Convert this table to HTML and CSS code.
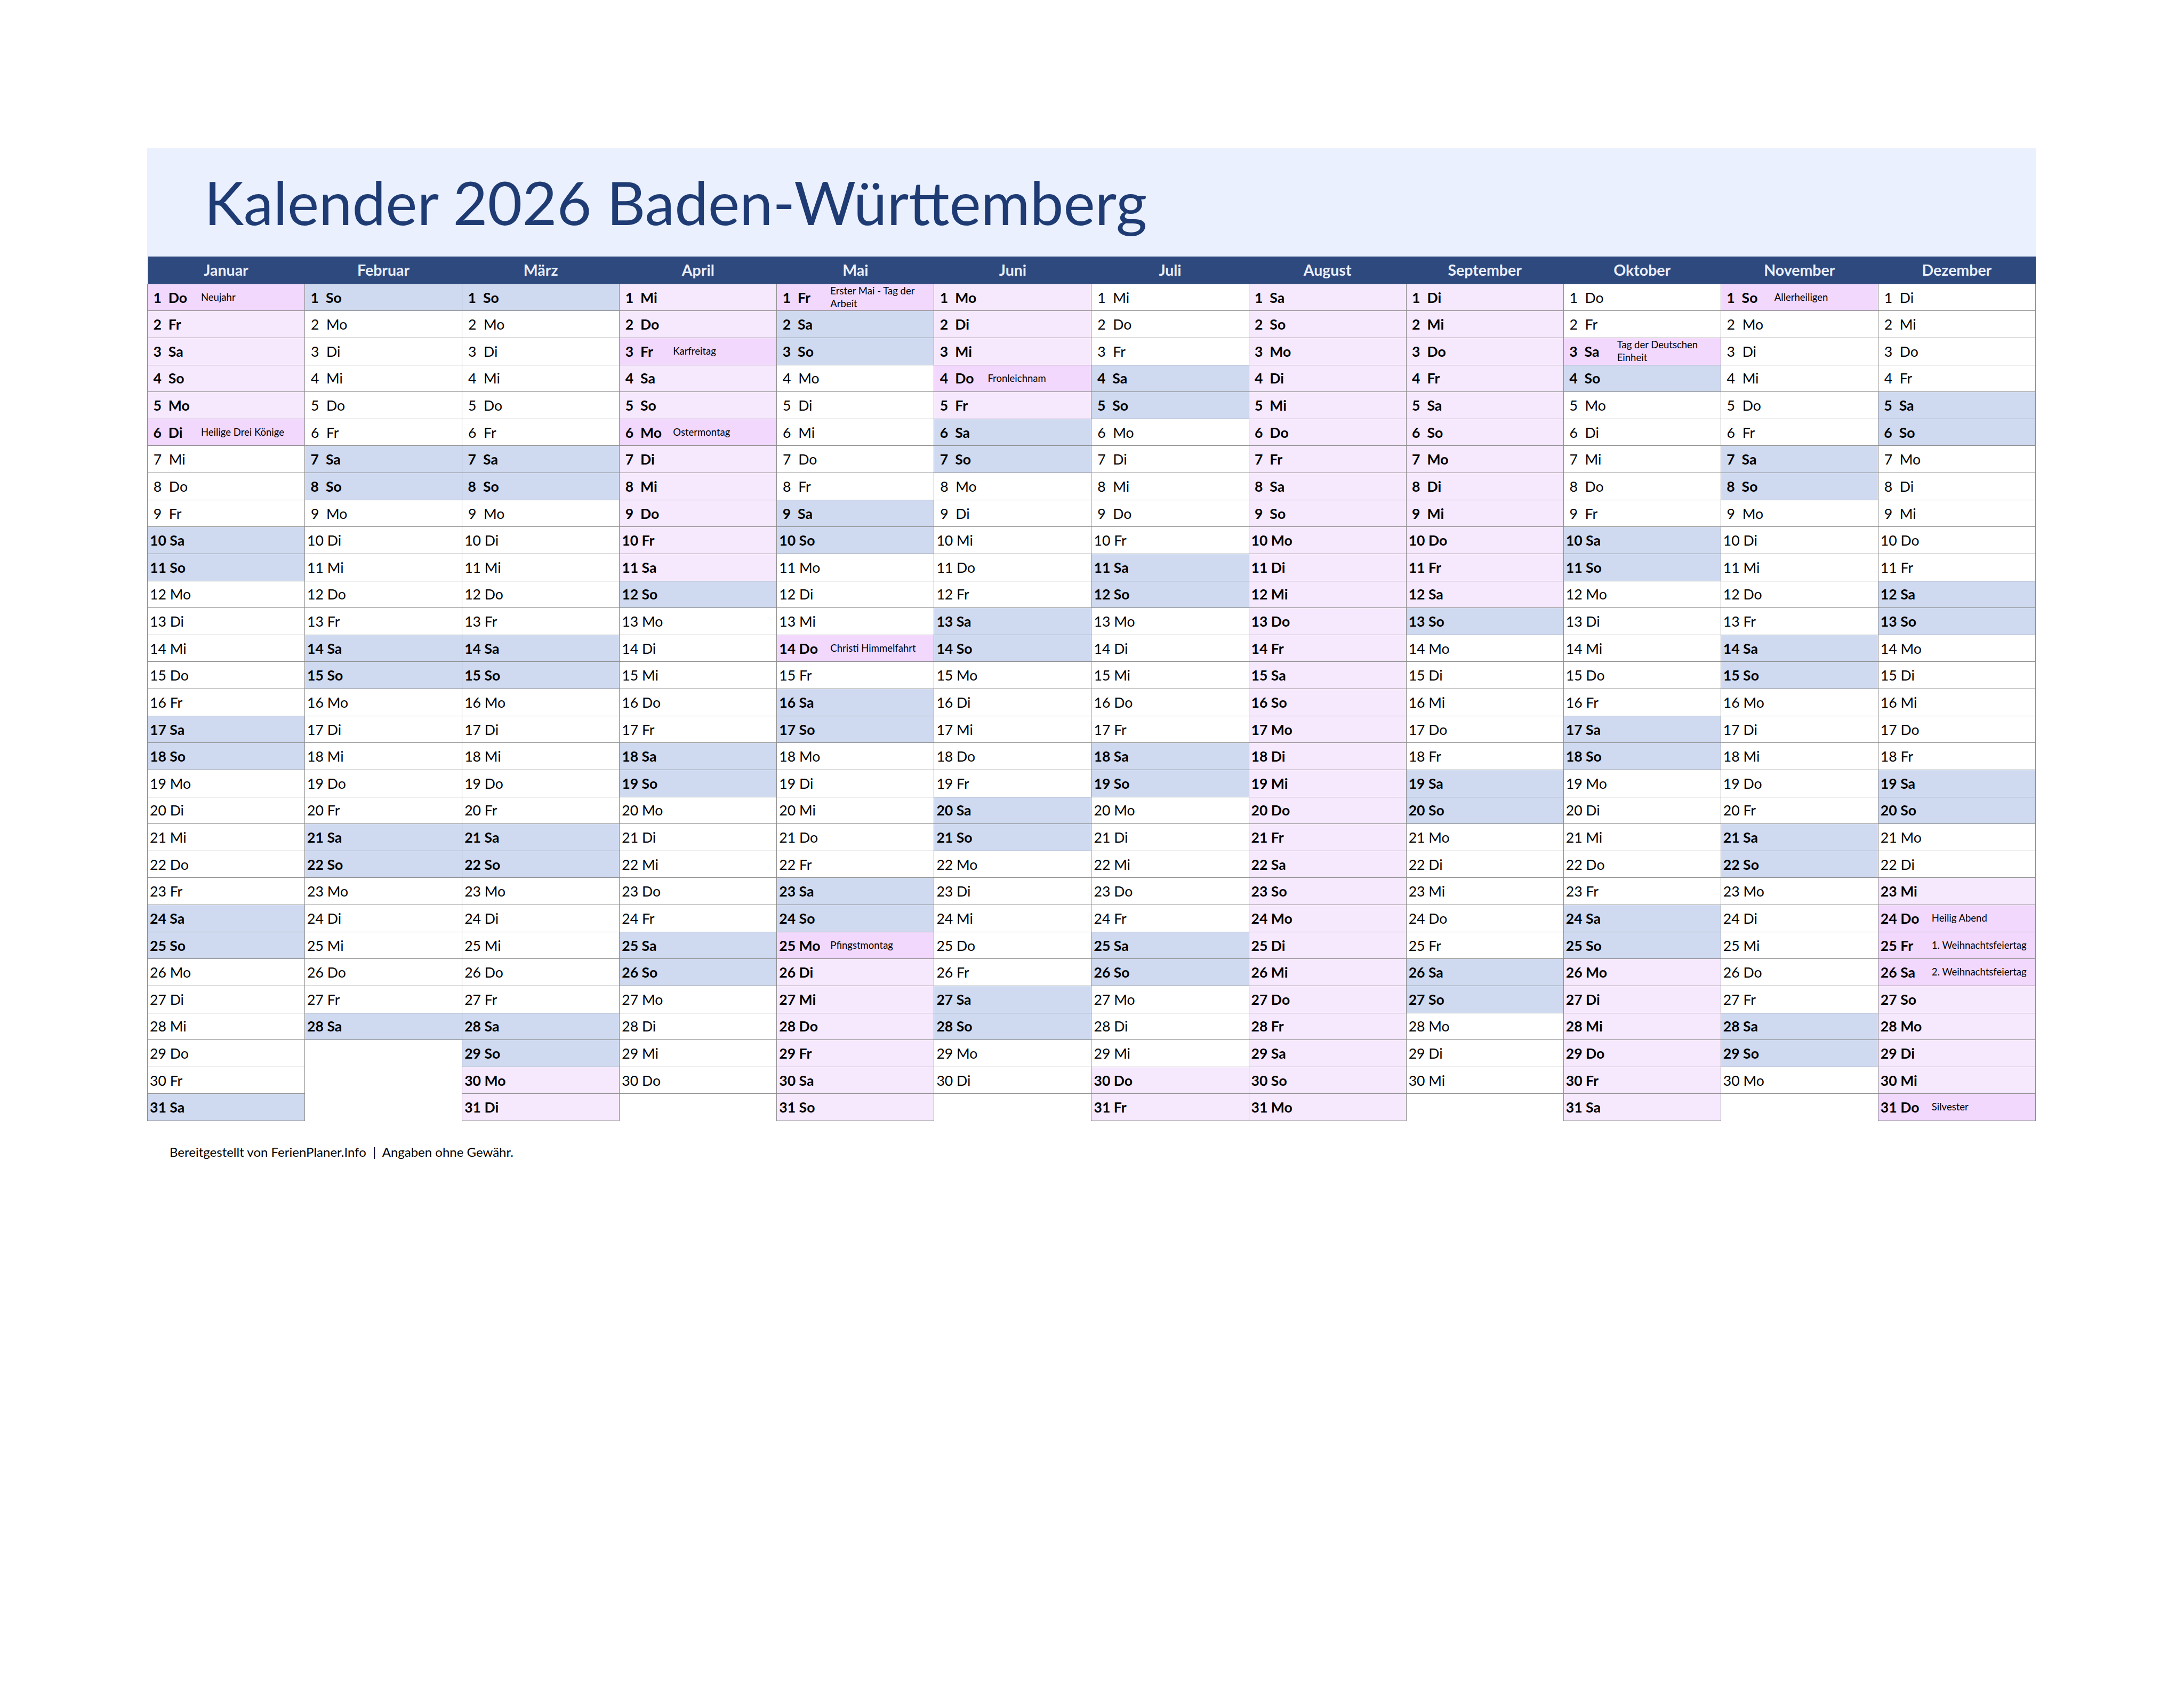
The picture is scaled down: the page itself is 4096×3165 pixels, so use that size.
FILE: index.html
```html
<!DOCTYPE html>
<html lang="de">
<head>
<meta charset="utf-8">
<title>Kalender 2026 Baden-Württemberg</title>
<link rel="stylesheet" href="styles.css">
</head>
<body>
<div class="page">
<div class="banner"><h1 class="title">Kalender 2026 Baden-Württemberg</h1></div>
<table class="cal">
<thead>
<tr><th>Januar</th><th>Februar</th><th>März</th><th>April</th><th>Mai</th><th>Juni</th><th>Juli</th><th>August</th><th>September</th><th>Oktober</th><th>November</th><th>Dezember</th></tr>
</thead>
<tbody>
<tr><td class="ho"><div class="c"><span class="d"> 1  Do</span><span class="n">Neujahr</span></div></td><td class="we"> 1  So</td><td class="we"> 1  So</td><td class="fe"> 1  Mi</td><td class="ho"><div class="c"><span class="d"> 1  Fr</span><span class="n">Erster Mai - Tag der<br>Arbeit</span></div></td><td class="fe"> 1  Mo</td><td> 1  Mi</td><td class="fe"> 1  Sa</td><td class="fe"> 1  Di</td><td> 1  Do</td><td class="ho"><div class="c"><span class="d"> 1  So</span><span class="n">Allerheiligen</span></div></td><td> 1  Di</td></tr>
<tr><td class="fe"> 2  Fr</td><td> 2  Mo</td><td> 2  Mo</td><td class="fe"> 2  Do</td><td class="we"> 2  Sa</td><td class="fe"> 2  Di</td><td> 2  Do</td><td class="fe"> 2  So</td><td class="fe"> 2  Mi</td><td> 2  Fr</td><td> 2  Mo</td><td> 2  Mi</td></tr>
<tr><td class="fe"> 3  Sa</td><td> 3  Di</td><td> 3  Di</td><td class="ho"><div class="c"><span class="d"> 3  Fr</span><span class="n">Karfreitag</span></div></td><td class="we"> 3  So</td><td class="fe"> 3  Mi</td><td> 3  Fr</td><td class="fe"> 3  Mo</td><td class="fe"> 3  Do</td><td class="ho"><div class="c"><span class="d"> 3  Sa</span><span class="n">Tag der Deutschen<br>Einheit</span></div></td><td> 3  Di</td><td> 3  Do</td></tr>
<tr><td class="fe"> 4  So</td><td> 4  Mi</td><td> 4  Mi</td><td class="fe"> 4  Sa</td><td> 4  Mo</td><td class="ho"><div class="c"><span class="d"> 4  Do</span><span class="n">Fronleichnam</span></div></td><td class="we"> 4  Sa</td><td class="fe"> 4  Di</td><td class="fe"> 4  Fr</td><td class="we"> 4  So</td><td> 4  Mi</td><td> 4  Fr</td></tr>
<tr><td class="fe"> 5  Mo</td><td> 5  Do</td><td> 5  Do</td><td class="fe"> 5  So</td><td> 5  Di</td><td class="fe"> 5  Fr</td><td class="we"> 5  So</td><td class="fe"> 5  Mi</td><td class="fe"> 5  Sa</td><td> 5  Mo</td><td> 5  Do</td><td class="we"> 5  Sa</td></tr>
<tr><td class="ho"><div class="c"><span class="d"> 6  Di</span><span class="n">Heilige Drei Könige</span></div></td><td> 6  Fr</td><td> 6  Fr</td><td class="ho"><div class="c"><span class="d"> 6  Mo</span><span class="n">Ostermontag</span></div></td><td> 6  Mi</td><td class="we"> 6  Sa</td><td> 6  Mo</td><td class="fe"> 6  Do</td><td class="fe"> 6  So</td><td> 6  Di</td><td> 6  Fr</td><td class="we"> 6  So</td></tr>
<tr><td> 7  Mi</td><td class="we"> 7  Sa</td><td class="we"> 7  Sa</td><td class="fe"> 7  Di</td><td> 7  Do</td><td class="we"> 7  So</td><td> 7  Di</td><td class="fe"> 7  Fr</td><td class="fe"> 7  Mo</td><td> 7  Mi</td><td class="we"> 7  Sa</td><td> 7  Mo</td></tr>
<tr><td> 8  Do</td><td class="we"> 8  So</td><td class="we"> 8  So</td><td class="fe"> 8  Mi</td><td> 8  Fr</td><td> 8  Mo</td><td> 8  Mi</td><td class="fe"> 8  Sa</td><td class="fe"> 8  Di</td><td> 8  Do</td><td class="we"> 8  So</td><td> 8  Di</td></tr>
<tr><td> 9  Fr</td><td> 9  Mo</td><td> 9  Mo</td><td class="fe"> 9  Do</td><td class="we"> 9  Sa</td><td> 9  Di</td><td> 9  Do</td><td class="fe"> 9  So</td><td class="fe"> 9  Mi</td><td> 9  Fr</td><td> 9  Mo</td><td> 9  Mi</td></tr>
<tr><td class="we">10 Sa</td><td>10 Di</td><td>10 Di</td><td class="fe">10 Fr</td><td class="we">10 So</td><td>10 Mi</td><td>10 Fr</td><td class="fe">10 Mo</td><td class="fe">10 Do</td><td class="we">10 Sa</td><td>10 Di</td><td>10 Do</td></tr>
<tr><td class="we">11 So</td><td>11 Mi</td><td>11 Mi</td><td class="fe">11 Sa</td><td>11 Mo</td><td>11 Do</td><td class="we">11 Sa</td><td class="fe">11 Di</td><td class="fe">11 Fr</td><td class="we">11 So</td><td>11 Mi</td><td>11 Fr</td></tr>
<tr><td>12 Mo</td><td>12 Do</td><td>12 Do</td><td class="we">12 So</td><td>12 Di</td><td>12 Fr</td><td class="we">12 So</td><td class="fe">12 Mi</td><td class="fe">12 Sa</td><td>12 Mo</td><td>12 Do</td><td class="we">12 Sa</td></tr>
<tr><td>13 Di</td><td>13 Fr</td><td>13 Fr</td><td>13 Mo</td><td>13 Mi</td><td class="we">13 Sa</td><td>13 Mo</td><td class="fe">13 Do</td><td class="we">13 So</td><td>13 Di</td><td>13 Fr</td><td class="we">13 So</td></tr>
<tr><td>14 Mi</td><td class="we">14 Sa</td><td class="we">14 Sa</td><td>14 Di</td><td class="ho"><div class="c"><span class="d">14 Do</span><span class="n">Christi Himmelfahrt</span></div></td><td class="we">14 So</td><td>14 Di</td><td class="fe">14 Fr</td><td>14 Mo</td><td>14 Mi</td><td class="we">14 Sa</td><td>14 Mo</td></tr>
<tr><td>15 Do</td><td class="we">15 So</td><td class="we">15 So</td><td>15 Mi</td><td>15 Fr</td><td>15 Mo</td><td>15 Mi</td><td class="fe">15 Sa</td><td>15 Di</td><td>15 Do</td><td class="we">15 So</td><td>15 Di</td></tr>
<tr><td>16 Fr</td><td>16 Mo</td><td>16 Mo</td><td>16 Do</td><td class="we">16 Sa</td><td>16 Di</td><td>16 Do</td><td class="fe">16 So</td><td>16 Mi</td><td>16 Fr</td><td>16 Mo</td><td>16 Mi</td></tr>
<tr><td class="we">17 Sa</td><td>17 Di</td><td>17 Di</td><td>17 Fr</td><td class="we">17 So</td><td>17 Mi</td><td>17 Fr</td><td class="fe">17 Mo</td><td>17 Do</td><td class="we">17 Sa</td><td>17 Di</td><td>17 Do</td></tr>
<tr><td class="we">18 So</td><td>18 Mi</td><td>18 Mi</td><td class="we">18 Sa</td><td>18 Mo</td><td>18 Do</td><td class="we">18 Sa</td><td class="fe">18 Di</td><td>18 Fr</td><td class="we">18 So</td><td>18 Mi</td><td>18 Fr</td></tr>
<tr><td>19 Mo</td><td>19 Do</td><td>19 Do</td><td class="we">19 So</td><td>19 Di</td><td>19 Fr</td><td class="we">19 So</td><td class="fe">19 Mi</td><td class="we">19 Sa</td><td>19 Mo</td><td>19 Do</td><td class="we">19 Sa</td></tr>
<tr><td>20 Di</td><td>20 Fr</td><td>20 Fr</td><td>20 Mo</td><td>20 Mi</td><td class="we">20 Sa</td><td>20 Mo</td><td class="fe">20 Do</td><td class="we">20 So</td><td>20 Di</td><td>20 Fr</td><td class="we">20 So</td></tr>
<tr><td>21 Mi</td><td class="we">21 Sa</td><td class="we">21 Sa</td><td>21 Di</td><td>21 Do</td><td class="we">21 So</td><td>21 Di</td><td class="fe">21 Fr</td><td>21 Mo</td><td>21 Mi</td><td class="we">21 Sa</td><td>21 Mo</td></tr>
<tr><td>22 Do</td><td class="we">22 So</td><td class="we">22 So</td><td>22 Mi</td><td>22 Fr</td><td>22 Mo</td><td>22 Mi</td><td class="fe">22 Sa</td><td>22 Di</td><td>22 Do</td><td class="we">22 So</td><td>22 Di</td></tr>
<tr><td>23 Fr</td><td>23 Mo</td><td>23 Mo</td><td>23 Do</td><td class="we">23 Sa</td><td>23 Di</td><td>23 Do</td><td class="fe">23 So</td><td>23 Mi</td><td>23 Fr</td><td>23 Mo</td><td class="fe">23 Mi</td></tr>
<tr><td class="we">24 Sa</td><td>24 Di</td><td>24 Di</td><td>24 Fr</td><td class="we">24 So</td><td>24 Mi</td><td>24 Fr</td><td class="fe">24 Mo</td><td>24 Do</td><td class="we">24 Sa</td><td>24 Di</td><td class="ho"><div class="c"><span class="d">24 Do</span><span class="n">Heilig Abend</span></div></td></tr>
<tr><td class="we">25 So</td><td>25 Mi</td><td>25 Mi</td><td class="we">25 Sa</td><td class="ho"><div class="c"><span class="d">25 Mo</span><span class="n">Pfingstmontag</span></div></td><td>25 Do</td><td class="we">25 Sa</td><td class="fe">25 Di</td><td>25 Fr</td><td class="we">25 So</td><td>25 Mi</td><td class="ho"><div class="c"><span class="d">25 Fr</span><span class="n">1. Weihnachtsfeiertag</span></div></td></tr>
<tr><td>26 Mo</td><td>26 Do</td><td>26 Do</td><td class="we">26 So</td><td class="fe">26 Di</td><td>26 Fr</td><td class="we">26 So</td><td class="fe">26 Mi</td><td class="we">26 Sa</td><td class="fe">26 Mo</td><td>26 Do</td><td class="ho"><div class="c"><span class="d">26 Sa</span><span class="n">2. Weihnachtsfeiertag</span></div></td></tr>
<tr><td>27 Di</td><td>27 Fr</td><td>27 Fr</td><td>27 Mo</td><td class="fe">27 Mi</td><td class="we">27 Sa</td><td>27 Mo</td><td class="fe">27 Do</td><td class="we">27 So</td><td class="fe">27 Di</td><td>27 Fr</td><td class="fe">27 So</td></tr>
<tr><td>28 Mi</td><td class="we">28 Sa</td><td class="we">28 Sa</td><td>28 Di</td><td class="fe">28 Do</td><td class="we">28 So</td><td>28 Di</td><td class="fe">28 Fr</td><td>28 Mo</td><td class="fe">28 Mi</td><td class="we">28 Sa</td><td class="fe">28 Mo</td></tr>
<tr><td>29 Do</td><td class="x"></td><td class="we">29 So</td><td>29 Mi</td><td class="fe">29 Fr</td><td>29 Mo</td><td>29 Mi</td><td class="fe">29 Sa</td><td>29 Di</td><td class="fe">29 Do</td><td class="we">29 So</td><td class="fe">29 Di</td></tr>
<tr><td>30 Fr</td><td class="x"></td><td class="fe">30 Mo</td><td>30 Do</td><td class="fe">30 Sa</td><td>30 Di</td><td class="fe">30 Do</td><td class="fe">30 So</td><td>30 Mi</td><td class="fe">30 Fr</td><td>30 Mo</td><td class="fe">30 Mi</td></tr>
<tr><td class="we">31 Sa</td><td class="x"></td><td class="fe">31 Di</td><td class="x"></td><td class="fe">31 So</td><td class="x"></td><td class="fe">31 Fr</td><td class="fe">31 Mo</td><td class="x"></td><td class="fe">31 Sa</td><td class="x"></td><td class="ho"><div class="c"><span class="d">31 Do</span><span class="n">Silvester</span></div></td></tr>
</tbody>
</table>
<p class="foot">Bereitgestellt von FerienPlaner.Info  |  Angaben ohne Gewähr.</p>
</div>
</body>
</html>
```
FILE: styles.css
```css
html, body {
  margin: 0;
  padding: 0;
  background: #ffffff;
}
body {
  font-family: Lato, "Noto Sans", "Liberation Sans", sans-serif;
  color: #000000;
}
.page {
  padding: 278px 0 0 276px;
}
.banner {
  width: 3542px;
  height: 203px;
  box-sizing: border-box;
  padding: 35px 0 0 107px;
  background: #eaf0fd;
}
.title {
  margin: 0;
  font-size: 112px;
  font-weight: 400;
  line-height: 132px;
  color: #1f3b74;
  white-space: nowrap;
}
.cal {
  width: 3542px;
  table-layout: fixed;
  border-collapse: collapse;
  border-spacing: 0;
}
.cal th {
  height: 50.7px;
  padding: 0;
  background: #2d497e;
  color: #e9eefa;
  font-size: 28.5px;
  font-weight: 700;
  text-align: center;
  vertical-align: middle;
  border: none;
}
.cal tbody tr {
  height: 50.64px;
}
.cal td {
  padding: 0 0 0 4px;
  border: 1px solid #8c8c8c;
  font-size: 26.6px;
  font-weight: 400;
  white-space: pre;
  vertical-align: middle;
  overflow: hidden;
  background: #ffffff;
}
.cal td.we {
  background: #cfdaf0;
  font-weight: 700;
}
.cal td.fe {
  background: #f6e9fd;
  font-weight: 700;
}
.cal td.ho {
  background: #f1d8fc;
  font-weight: 700;
}
.cal td.x {
  border: none;
  background: transparent;
}
.c {
  display: flex;
  align-items: center;
}
.d {
  flex: none;
  width: 96px;
  white-space: pre;
}
.n {
  font-size: 18.5px;
  font-weight: 400;
  line-height: 1.28;
  white-space: nowrap;
}
.foot {
  margin: 43px 0 0 42px;
  font-size: 24px;
  white-space: pre;
  color: #000000;
}
```
